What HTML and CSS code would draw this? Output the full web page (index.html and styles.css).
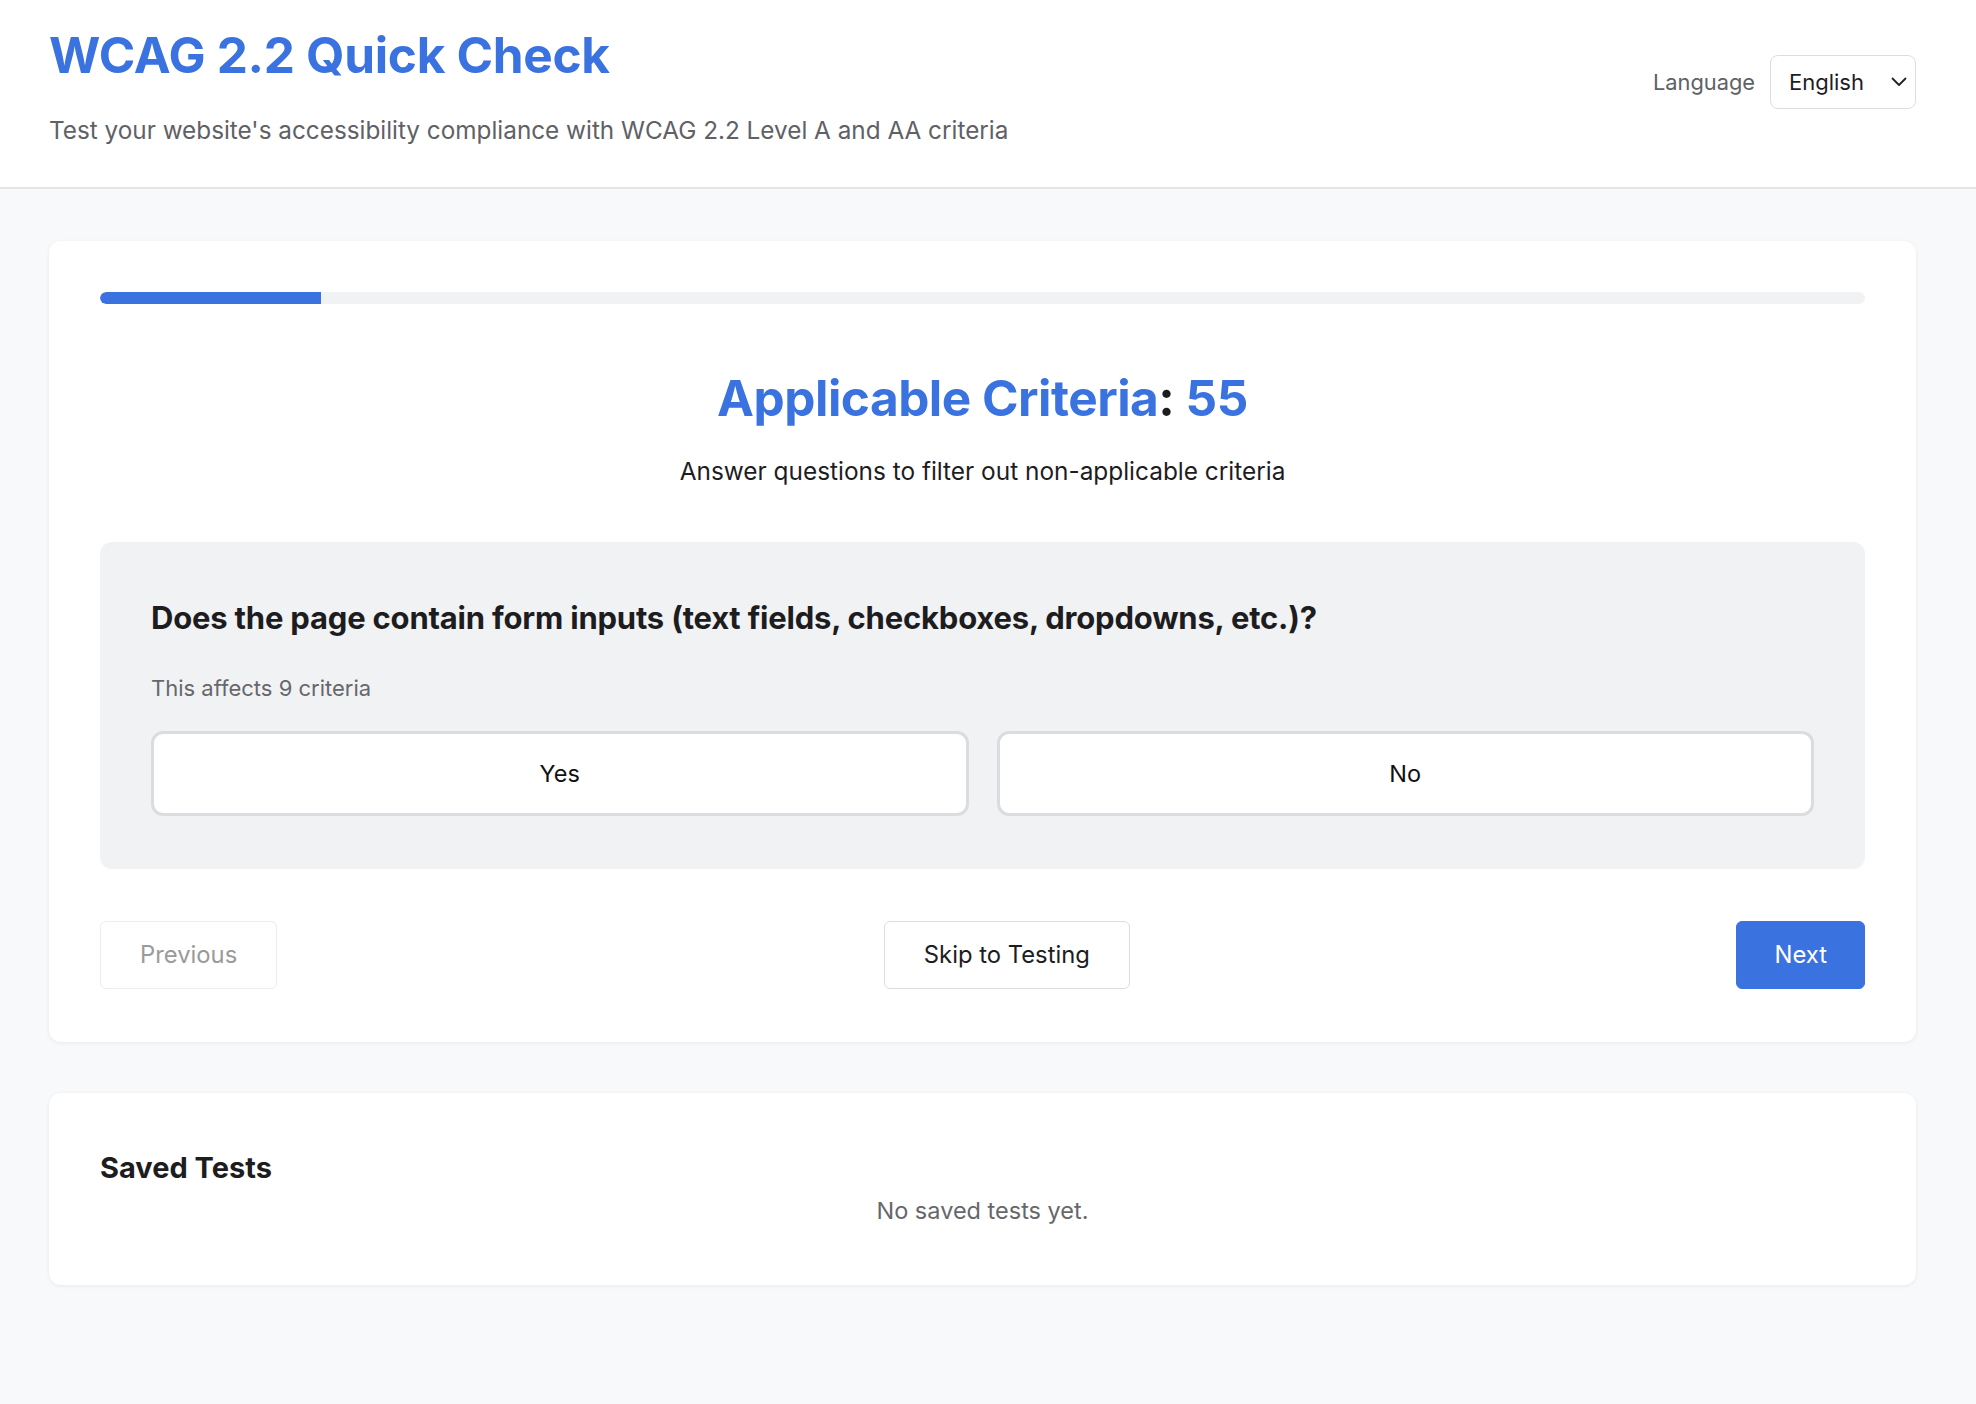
FILE: index.html
```html
<!DOCTYPE html>
<html lang="en">
<head>
<meta charset="utf-8">
<title>WCAG 2.2 Quick Check</title>
<link rel="stylesheet" href="styles.css">
</head>
<body>
<header class="site-header">
  <div class="brand">
    <h1 class="title">WCAG 2.2 Quick Check</h1>
    <p class="subtitle">Test your website's accessibility compliance with WCAG 2.2 Level A and AA criteria</p>
  </div>
  <div class="lang">
    <span class="lang-label">Language</span>
    <div class="lang-select">
      <span>English</span>
      <svg class="chev" width="16" height="10" viewBox="0 0 16 10" aria-hidden="true"><path d="M1.5 1.5 L8 8 L14.5 1.5" fill="none" stroke="#222" stroke-width="1.8" stroke-linecap="round" stroke-linejoin="round"/></svg>
    </div>
  </div>
</header>
<main class="main">
  <section class="card wizard">
    <div class="progress"><div class="progress-fill" style="width:12.5%"></div></div>
    <h2 class="heading"><span class="blue">Applicable Criteria</span>: <span class="blue">55</span></h2>
    <p class="lead">Answer questions to filter out non-applicable criteria</p>
    <div class="question">
      <h3 class="q-text">Does the page contain form inputs (text fields, checkboxes, dropdowns, etc.)?</h3>
      <p class="q-note">This affects 9 criteria</p>
      <div class="answers">
        <button class="answer">Yes</button>
        <button class="answer">No</button>
      </div>
    </div>
    <div class="nav">
      <button class="btn btn-disabled">Previous</button>
      <button class="btn">Skip to Testing</button>
      <button class="btn btn-primary">Next</button>
    </div>
  </section>
  <section class="card saved">
    <h3 class="saved-title">Saved Tests</h3>
    <p class="empty">No saved tests yet.</p>
  </section>
</main>
</body>
</html>
```
FILE: styles.css
```css
* { box-sizing: border-box; }
html, body { margin: 0; padding: 0; }
body {
  background: #f8f9fa;
  font-family: Inter, "Noto Sans", "Liberation Sans", sans-serif;
  color: #1d1d1f;
  min-height: 1404px;
}
.site-header {
  background: #fff;
  border-bottom: 2px solid #e2e4e7;
  display: flex;
  justify-content: space-between;
  align-items: flex-start;
  padding: 27px 60px 39px 49px;
}
.title {
  margin: 0;
  font-size: 49.5px;
  line-height: 57px;
  font-weight: 700;
  color: #3a72e0;
  letter-spacing: -0.3px;
}
.subtitle {
  margin: 28px 0 0;
  font-size: 24.3px;
  line-height: 36px;
  color: #5f6166;
}
.lang {
  display: flex;
  align-items: center;
  gap: 15px;
  margin-top: 28px;
}
.lang-label {
  font-size: 21.8px;
  color: #5f6166;
}
.lang-select {
  width: 146px;
  height: 54px;
  border: 1.5px solid #dcdde0;
  border-radius: 8px;
  background: #fff;
  display: flex;
  align-items: center;
  justify-content: space-between;
  padding: 0 8px 0 18px;
  font-size: 22px;
  color: #1d1d1f;
}
.chev { display: block; }
.main {
  padding: 52px 60px 60px 49px;
  display: flex;
  flex-direction: column;
  gap: 51px;
}
.card {
  background: #fff;
  border-radius: 12px;
  box-shadow: 0 1px 4px rgba(0,0,0,0.07);
  padding: 51px;
}
.wizard { padding-bottom: 53px; }
.progress {
  height: 12px;
  background: #f1f2f4;
  border-radius: 6px;
  overflow: hidden;
}
.progress-fill {
  height: 100%;
  background: #3a72e0;
  border-radius: 6px 0 0 6px;
}
.heading {
  margin: 63px 0 0;
  text-align: center;
  font-size: 49.5px;
  line-height: 62px;
  font-weight: 700;
  color: #1d1d1f;
  letter-spacing: -0.5px;
}
.blue { color: #3a72e0; }
.lead {
  margin: 24.5px 0 0;
  text-align: center;
  font-size: 24.4px;
  line-height: 34px;
  color: #1d1d1f;
}
.question {
  margin-top: 54px;
  background: #f1f2f4;
  border-radius: 12px;
  padding: 56.5px 51px 53.5px;
}
.q-text {
  margin: 0;
  font-size: 31px;
  line-height: 39px;
  font-weight: 700;
  color: #1d1d1f;
  letter-spacing: -0.2px;
}
.q-note {
  margin: 34.5px 0 0;
  font-size: 22px;
  line-height: 32px;
  color: #66676b;
}
.answers {
  margin-top: 27px;
  display: grid;
  grid-template-columns: 1fr 1fr;
  gap: 28px;
}
.answer {
  height: 85px;
  background: #fff;
  border: 3px solid #dadce0;
  border-radius: 12px;
  font-family: inherit;
  font-size: 23.5px;
  color: #111;
}
.nav {
  margin-top: 51.5px;
  display: flex;
  justify-content: space-between;
  align-items: center;
}
.btn {
  height: 68px;
  padding: 0 39px;
  background: #fff;
  border: 1.5px solid #dcdde0;
  border-radius: 6px;
  font-family: inherit;
  font-size: 23.8px;
  color: #1d1d1f;
}
.btn-disabled {
  color: #9a9a9a;
  border-color: #ececee;
}
.btn-primary {
  background: #3a72e0;
  border-color: #3a72e0;
  color: #fff;
  padding: 0 37px;
}
.saved { padding: 55px 51px 56px; }
.saved-title {
  margin: 0;
  font-size: 29px;
  line-height: 39px;
  font-weight: 700;
  color: #1d1d1f;
}
.empty {
  margin: 6px 0 0;
  text-align: center;
  font-size: 23.5px;
  line-height: 36px;
  color: #66676b;
}
```
